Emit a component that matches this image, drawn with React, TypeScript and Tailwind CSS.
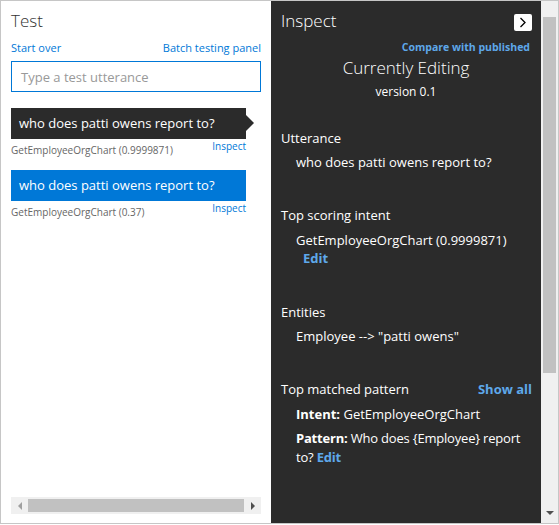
import React from "react";

const font = { fontFamily: '"Open Sans", "Noto Sans", sans-serif' };

function Bubble({ dark }: { dark: boolean }) {
  return (
    <div className="relative w-[235px]">
      <div
        className={`h-[31px] flex items-center pl-[8px] text-white text-[13px] ${
          dark ? "bg-[#2b2b2b]" : "bg-[#0078d7]"
        }`}
      >
        who does patti owens report to?
      </div>
      {dark && (
        <div className="absolute right-[-8px] top-[7px] w-0 h-0 border-y-[8px] border-y-transparent border-l-[8px] border-l-[#2b2b2b]" />
      )}
    </div>
  );
}

export default function App() {
  return (
    <div style={font} className="w-[559px] h-[524px] border border-[#c6c6c6] flex bg-white overflow-hidden">
      {/* Left panel */}
      <div className="w-[270px] shrink-0 flex flex-col px-[10px] relative">
        <div className="mt-[9px] text-[17px] leading-[22px] font-light text-[#333]">Test</div>
        <div className="mt-[9px] flex justify-between text-[11px] leading-[14px] font-medium text-[#0078d7]">
          <span>Start over</span>
          <span>Batch testing panel</span>
        </div>
        <div className="mt-[6px] h-[31px] border border-[#0078d7] flex items-center pl-[9px] pt-[2px] text-[13px] text-[#999]">
          Type a test utterance
        </div>
        <div className="mt-[16px]">
          <Bubble dark />
        </div>
        <div className="w-[235px] flex justify-between items-start">
          <span className="mt-[4px] text-[10px] leading-[14px] text-[#666]">GetEmployeeOrgChart (0.9999871)</span>
          <span className="text-[10px] leading-[14px] text-[#0078d7]">Inspect</span>
        </div>
        <div className="mt-[13px]">
          <Bubble dark={false} />
        </div>
        <div className="w-[235px] flex justify-between items-start">
          <span className="mt-[4px] text-[10px] leading-[14px] text-[#666]">GetEmployeeOrgChart (0.37)</span>
          <span className="text-[10px] leading-[14px] text-[#0078d7]">Inspect</span>
        </div>
        <div className="flex-1" />
        {/* horizontal scrollbar */}
        <div className="mb-[9px] h-[17px] w-[250px] bg-[#f0f0f0] flex items-center">
          <div className="w-[17px] h-[17px] flex items-center justify-center">
            <div className="w-0 h-0 border-y-[4px] border-y-transparent border-r-[4px] border-r-[#a0a0a0]" />
          </div>
          <div className="flex-1 h-[13px] bg-[#c1c1c1]" />
          <div className="w-[17px] h-[17px] flex items-center justify-center">
            <div className="w-0 h-0 border-y-[4px] border-y-transparent border-l-[4px] border-l-[#505050]" />
          </div>
        </div>
      </div>

      {/* Dark panel */}
      <div className="w-[270px] shrink-0 bg-[#2b2b2b] text-white px-[10px] flex flex-col">
        <div className="mt-[9px] flex justify-between items-start">
          <span className="text-[17px] leading-[22px] font-light">Inspect</span>
          <div className="mt-[4px] mr-[-1px] w-[18px] h-[17px] bg-white rounded-[2px] flex items-center justify-center">
            <svg width="8" height="11" viewBox="0 0 8 11">
              <path d="M1.5 1 L6 5.5 L1.5 10" stroke="#000" strokeWidth="1.3" fill="none" />
            </svg>
          </div>
        </div>
        <div className="mt-[8px] text-right text-[10.5px] leading-[14px] font-bold text-[#5ea8ea] pr-[1px]">
          Compare with published
        </div>
        <div className="mt-[2px] text-center text-[17px] leading-[24px] font-light">Currently Editing</div>
        <div className="text-center text-[12px] leading-[18px] mt-[3px]">version 0.1</div>

        <div className="mt-[28px] text-[13px] leading-[18px]">Utterance</div>
        <div className="mt-[6px] pl-[15px] text-[13px] leading-[18px]">who does patti owens report to?</div>

        <div className="mt-[35px] text-[13px] leading-[18px]">Top scoring intent</div>
        <div className="mt-[7px] pl-[15px] text-[13px] leading-[18px]">GetEmployeeOrgChart (0.9999871)</div>
        <div className="pl-[22px] text-[13px] leading-[18px] font-bold text-[#5ea8ea]">Edit</div>

        <div className="mt-[36px] text-[13px] leading-[18px]">Entities</div>
        <div className="mt-[6px] pl-[15px] text-[13px] leading-[18px]">Employee --&gt; "patti owens"</div>

        <div className="mt-[35px] flex justify-between items-end">
          <span className="text-[13px] leading-[18px]">Top matched pattern</span>
          <span className="text-[13px] leading-[18px] font-bold text-[#5ea8ea] mr-[-1px]">Show all</span>
        </div>
        <div className="mt-[7px] pl-[15px] text-[13px] leading-[18px]">
          <span className="font-bold">Intent:</span> GetEmployeeOrgChart
        </div>
        <div className="mt-[6px] pl-[15px] mr-[-4px] text-[13px] leading-[19px] tracking-[-0.2px]">
          <span className="font-bold">Pattern:</span> Who does {"{Employee}"} report to?{" "}
          <span className="font-bold text-[#5ea8ea]">Edit</span>
        </div>
      </div>

      {/* vertical scrollbar */}
      <div className="w-[17px] shrink-0 bg-[#f0f0f0] flex flex-col items-center">
        <div className="h-[16px]" />
        <div className="w-[13px] h-[356px] bg-[#c1c1c1]" />
        <div className="flex-1" />
        <div className="h-[17px] w-full flex items-center justify-center mb-[2px]">
          <div className="w-0 h-0 border-x-[4px] border-x-transparent border-t-[4px] border-t-[#505050]" />
        </div>
      </div>
    </div>
  );
}
